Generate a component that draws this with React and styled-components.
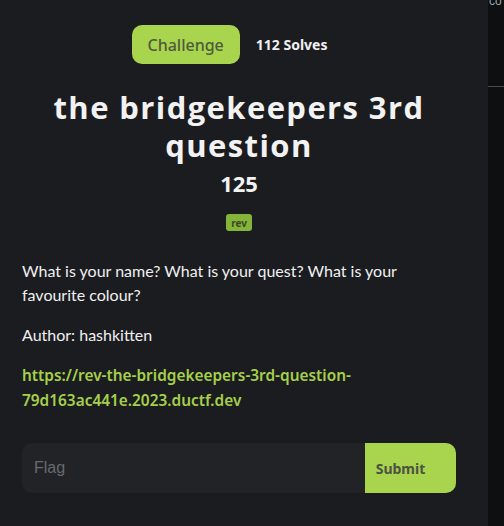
import React from 'react';
import styled, { createGlobalStyle } from 'styled-components';

const Global = createGlobalStyle`
  html, body { margin: 0; padding: 0; background: #1b1c20; }
  body { width: 504px; height: 526px; overflow: hidden; }
`;

const Page = styled.div`
  display: flex;
  width: 504px;
  height: 526px;
`;

const Modal = styled.div`
  width: 488px;
  box-sizing: border-box;
  background: #1b1c20;
  padding: 25px 32px 0 22px;
  display: flex;
  flex-direction: column;
  align-items: center;
`;

const Backdrop = styled.div`
  flex: 1;
  background: #0e0f10;
  position: relative;
  overflow: hidden;
`;

const Peek = styled.span`
  position: absolute;
  left: 1px;
  top: -6px;
  font: 12px "Liberation Sans", sans-serif;
  color: #9aa3ad;
`;

const Rule = styled.div`
  position: absolute;
  left: 0;
  right: 0;
  top: 86px;
  height: 1px;
  background: #4a4c50;
`;

const Nav = styled.div`
  display: flex;
  align-items: center;
  gap: 16px;
  margin-left: -19px;
`;

const Tab = styled.div`
  height: 39px;
  padding: ${p => (p.active ? '0 16px' : '0')};
  display: flex;
  align-items: center;
  border-radius: 10px;
  font-family: "Noto Sans", sans-serif;
  color: ${p => (p.active ? '#505a3c' : '#f0f0f0')};
  background: ${p => (p.active ? '#a8d44e' : 'transparent')};
  font-weight: ${p => (p.active ? 500 : 700)};
  font-size: ${p => (p.active ? '16px' : '14px')};
`;

const Title = styled.h1`
  margin: 24px 0 0;
  text-align: center;
  font: 700 31px/38px "Open Sans", sans-serif;
  color: #f2f2f2;
  letter-spacing: 1.4px;
`;

const Value = styled.div`
  margin-top: 4px;
  font: 700 22px/30px "Open Sans", sans-serif;
  color: #f2f2f2;
`;

const Tag = styled.span`
  margin-top: 16px;
  padding: 0 5px;
  height: 17px;
  display: inline-flex;
  align-items: center;
  border-radius: 3px;
  background: #84b53a;
  color: #3b4a25;
  font: 700 10px "Noto Sans", sans-serif;
`;

const Body = styled.div`
  align-self: stretch;
  margin-top: 28px;
  font: 400 16px/24px Lato, sans-serif;
  color: #f0f0f0;

  p { margin: 0 0 16px; }
`;

const Link = styled.a`
  display: block;
  margin-top: 1px;
  color: #a6d04a;
  text-decoration: none;
  font: 600 15.4px/25px "Noto Sans", sans-serif;
`;

const Form = styled.form`
  align-self: stretch;
  margin-top: 30px;
  display: flex;
  height: 50px;
  border-radius: 10px;
  overflow: hidden;
  background: #222326;
`;

const Input = styled.input`
  flex: 1;
  min-width: 0;
  border: none;
  outline: none;
  background: transparent;
  padding: 0 12px;
  color: #e0e0e0;
  font: 16px "Liberation Sans", Arial, sans-serif;
  caret-color: #ffffff;

  &::placeholder { color: #676a70; }
`;

const Submit = styled.button`
  width: 91px;
  padding: 0 20px 0 0;
  border: none;
  background: #a8d44e;
  color: #4d5242;
  font: 700 14px "Noto Sans", sans-serif;
  cursor: pointer;
`;

export default function App() {
  return (
    <>
      <Global />
      <Page>
        <Modal>
          <Nav>
            <Tab active>Challenge</Tab>
            <Tab>112 Solves</Tab>
          </Nav>
          <Title>the bridgekeepers 3rd<br />question</Title>
          <Value>125</Value>
          <Tag>rev</Tag>
          <Body>
            <p>What is your name? What is your quest? What is your favourite colour?</p>
            <p>Author: hashkitten</p>
            <Link href="#">https://rev-the-bridgekeepers-3rd-question-79d163ac441e.2023.ductf.dev</Link>
          </Body>
          <Form onSubmit={e => e.preventDefault()}>
            <Input placeholder="Flag" autoFocus />
            <Submit type="submit">Submit</Submit>
          </Form>
        </Modal>
        <Backdrop>
          <Peek>co</Peek>
          <Rule />
        </Backdrop>
      </Page>
    </>
  );
}
